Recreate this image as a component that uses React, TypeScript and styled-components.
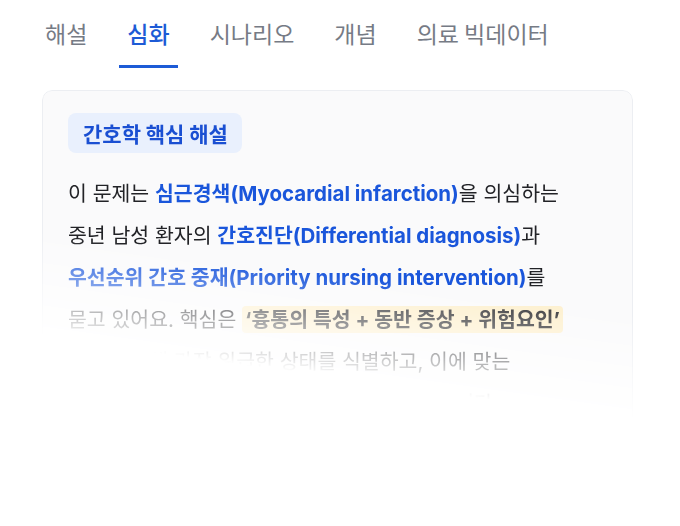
import React, { useState } from 'react';
import styled, { createGlobalStyle } from 'styled-components';

const GlobalStyle = createGlobalStyle`
  html, body {
    margin: 0;
    padding: 0;
    background: #ffffff;
  }
  body {
    font-family: Inter, "Noto Sans CJK KR", sans-serif;
    -webkit-font-smoothing: antialiased;
  }
`;

const Page = styled.div`
  width: 680px;
  height: 526px;
  overflow: hidden;
  background: #ffffff;
`;

const TabBar = styled.nav`
  display: flex;
  gap: 24px;
  padding: 18px 0 0 37px;
`;

const Tab = styled.button<{ active: boolean }>`
  appearance: none;
  background: none;
  border: none;
  border-bottom: 3px solid ${({ active }) => (active ? '#1d5bd6' : 'transparent')};
  padding: 0 8px 17px;
  margin: 0;
  font-family: "Noto Sans CJK KR", sans-serif;
  font-size: 23px;
  line-height: 30px;
  font-weight: ${({ active }) => (active ? 500 : 400)};
  color: ${({ active }) => (active ? '#1d5bd6' : '#767b85')};
  cursor: pointer;
  white-space: nowrap;
`;

const Card = styled.section`
  margin: 22px 0 0 42px;
  width: 591px;
  height: 340px;
  box-sizing: border-box;
  padding: 22px 25px 0;
  background: #fafafb;
  border: 1px solid #eceef2;
  border-radius: 10px;
  -webkit-mask-image: linear-gradient(8deg, transparent 22%, #000 47%);
  mask-image: linear-gradient(8deg, transparent 22%, #000 47%);
`;

const Badge = styled.div`
  display: inline-flex;
  align-items: center;
  height: 40px;
  padding: 0 14px 0 15px;
  border-radius: 8px;
  background: #e9f0fd;
  color: #1a4fd2;
  font-family: "Noto Sans CJK KR", sans-serif;
  font-size: 21px;
  font-weight: 700;
`;

const Body = styled.div`
  margin-top: 20px;
  font-size: 20.5px;
  line-height: 42px;
  color: #222327;
`;

const Line = styled.div`
  white-space: nowrap;
`;

const Term = styled.strong`
  font-weight: 700;
  color: #1a56db;
`;

const Highlight = styled.strong`
  font-weight: 700;
  color: #3b3b3d;
  background: #fdf0cf;
  border-radius: 4px;
  padding: 1px 3px;
`;

const tabs = ['해설', '심화', '시나리오', '개념', '의료 빅데이터'];

export default function App() {
  const [current, setCurrent] = useState('심화');

  return (
    <Page>
      <GlobalStyle />
      <TabBar>
        {tabs.map((t) => (
          <Tab key={t} active={t === current} onClick={() => setCurrent(t)}>
            {t}
          </Tab>
        ))}
      </TabBar>

      <Card>
        <Badge>간호학 핵심 해설</Badge>
        <Body>
          <Line>
            이 문제는 <Term>심근경색(Myocardial infarction)</Term>을 의심하는
          </Line>
          <Line>
            중년 남성 환자의 <Term>간호진단(Differential diagnosis)</Term>과
          </Line>
          <Line>
            <Term>우선순위 간호 중재(Priority nursing intervention)</Term>를
          </Line>
          <Line>
            묻고 있어요. 핵심은 <Highlight>‘흉통의 특성 + 동반 증상 + 위험요인’</Highlight>
          </Line>
          <Line>이를 종합해 가장 위급한 상태를 식별하고, 이에 맞는</Line>
          <Line>간호 중재를 우선적으로 수행하는 것이 중요합니다.</Line>
        </Body>
      </Card>
    </Page>
  );
}
